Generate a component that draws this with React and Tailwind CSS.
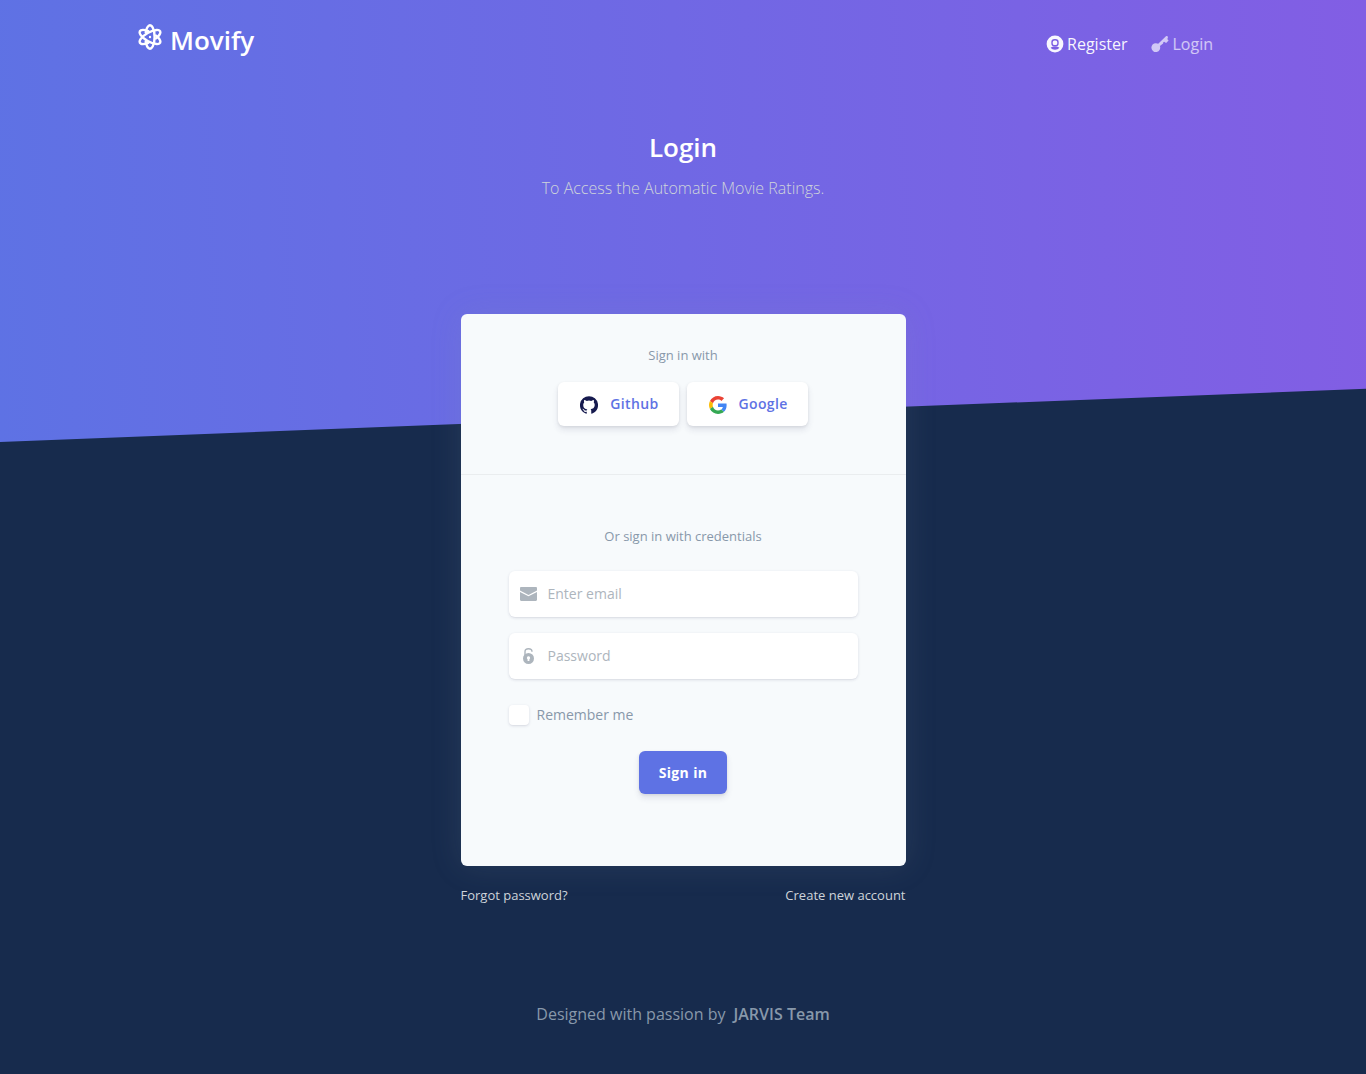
import React from "react";

function LogoIcon() {
  return (
    <svg viewBox="0 0 26 26" className="size-[26px]" fill="none" stroke="currentColor" strokeWidth="2.4" strokeLinecap="round" aria-hidden="true">
      <path d="M8.750 8.500A4.600 11.700 0 1 1 8.750 17.500" />
      <path d="M8.750 8.500A4.600 11.700 0 1 1 8.750 17.500" transform="rotate(120 13 13)" />
      <path d="M8.750 8.500A4.600 11.700 0 1 1 8.750 17.500" transform="rotate(240 13 13)" />
      <circle cx="13" cy="13" r="1.2" fill="currentColor" stroke="none" />
    </svg>
  );
}

function UserIcon() {
  return (
    <svg viewBox="0 0 18 18" className="size-[18px]" aria-hidden="true">
      <circle cx="9" cy="9" r="8.4" fill="currentColor" />
      <rect x="6" y="4.800" width="6" height="6" rx="2.600" fill="none" stroke="#7c60e3" strokeWidth="1.400" />
      <path d="M4.600 12.800c1-.8 2.500-1.300 4.400-1.300s3.400.5 4.400 1.300c-1 1.300-2.600 2-4.400 2s-3.400-.7-4.400-2z" fill="#7c60e3" />
    </svg>
  );
}

function KeyIcon() {
  return (
    <svg viewBox="0 0 18 18" className="size-[18px]" fill="currentColor" aria-hidden="true">
      <path d="M5 8.200c.8 0 1.500.200 2.200.6L15.200 1l1.500.3.2 1.700-.7.900 1.400 1.700-2.500 2.500-2-1.300-.8.400-.2 1.300-3.200 2.500A4.400 4.400 0 1 1 5 8.200z" />
    </svg>
  );
}

function GithubIcon() {
  return (
    <svg viewBox="0 0 24 24" className="mt-0.5 size-[18px]" fill="#161a4e" aria-hidden="true">
      <path d="M12 .3a12 12 0 0 0-3.800 23.400c.6.1.8-.3.8-.6v-2c-3.300.7-4-1.600-4-1.600-.6-1.400-1.400-1.800-1.400-1.800-1-.7.100-.7.100-.7 1.200 0 1.900 1.200 1.900 1.200 1 1.800 2.800 1.300 3.500 1 0-.8.400-1.300.7-1.600-2.700-.3-5.500-1.300-5.500-6 0-1.200.5-2.300 1.300-3.100-.2-.4-.6-1.600 0-3.200 0 0 1-.3 3.400 1.200a11.500 11.500 0 0 1 6 0c2.300-1.500 3.300-1.200 3.300-1.200.6 1.600.2 2.800 0 3.200.9.800 1.300 1.900 1.300 3.200 0 4.600-2.800 5.600-5.500 5.900.5.400.9 1 .9 2.200v3.300c0 .3.100.7.800.6A12 12 0 0 0 12 .3" />
    </svg>
  );
}

function GoogleIcon() {
  return (
    <svg viewBox="0 0 48 48" className="mt-0.5 size-[18px]" aria-hidden="true">
      <path fill="#EA4335" d="M24 9.500c3.540 0 6.710 1.220 9.210 3.600l6.850-6.850C35.900 2.380 30.470 0 24 0 14.620 0 6.510 5.380 2.560 13.220l7.980 6.190C12.430 13.720 17.740 9.500 24 9.500z" />
      <path fill="#4285F4" d="M46.980 24.550c0-1.570-.15-3.090-.38-4.550H24v9.020h12.940c-.58 2.960-2.260 5.480-4.780 7.180l7.730 6c4.510-4.180 7.090-10.360 7.090-17.650z" />
      <path fill="#FBBC05" d="M10.530 28.590A14.500 14.500 0 0 1 9.770 24c0-1.600.27-3.140.76-4.590l-7.980-6.190A23.900 23.900 0 0 0 0 24c0 3.880.92 7.540 2.560 10.780l7.970-6.190z" />
      <path fill="#34A853" d="M24 48c6.480 0 11.930-2.130 15.890-5.810l-7.730-6c-2.150 1.450-4.920 2.300-8.160 2.300-6.260 0-11.570-4.220-13.470-9.910l-7.980 6.190C6.510 42.620 14.620 48 24 48z" />
    </svg>
  );
}

function MailIcon() {
  return (
    <svg viewBox="0 0 17 14" className="h-[14px] w-[17px]" fill="currentColor" aria-hidden="true">
      <path d="M0 1.200C0 .5.500 0 1.200 0h14.600c.7 0 1.200.5 1.200 1.200v2.300L8.500 8 0 3.500z" />
      <path d="M0 4.900 8.500 9.300 17 4.900v7.900c0 .7-.5 1.200-1.200 1.200H1.200C.5 14 0 13.500 0 12.800z" />
    </svg>
  );
}

function LockIcon() {
  return (
    <svg viewBox="0 0 17 16" className="h-[16px] w-[17px]" aria-hidden="true">
      <path d="M5 7.500V3.700C5 1.700 6.500.700 8.500.700s3.500 1 3.500 3" fill="none" stroke="currentColor" strokeWidth="1.400" />
      <path fill="currentColor" fillRule="evenodd" d="M8.500 5a5.500 5.500 0 1 1 0 11 5.500 5.500 0 0 1 0-11zm0 3.200a1.700 1.700 0 0 0-.9 3.100v1.700h1.800v-1.700a1.700 1.700 0 0 0-.9-3.100z" />
    </svg>
  );
}

const raised = "shadow-[0_4px_6px_rgba(50,50,93,0.11),0_1px_3px_rgba(0,0,0,0.08)]";
const field = "flex h-[46px] items-center rounded-md bg-white px-[11px] text-[#adb5bd] shadow-[0_1px_3px_rgba(50,50,93,0.15),0_1px_0_rgba(0,0,0,0.02)]";

function Field({ id, type, label, icon }) {
  return (
    <div className={field}>
      {icon}
      <input
        id={id}
        type={type}
        placeholder={label}
        aria-label={label}
        className="ml-[11px] min-w-0 flex-1 bg-transparent text-sm text-[#8898aa] outline-none placeholder:text-[#adb5bd]"
      />
    </div>
  );
}

function SocialButton({ icon, children }) {
  return (
    <button type="button" className={`flex h-11 items-center gap-3 rounded-md bg-white pr-5 pl-[22px] text-sm font-semibold tracking-[0.025em] text-[#5e72e4] ${raised}`}>
      {icon}
      <span>{children}</span>
    </button>
  );
}

export default function App() {
  return (
    <div className="min-h-screen bg-[#172b4d] font-['Open_Sans',sans-serif] text-base">
      <header className="h-[442px] bg-[linear-gradient(87deg,#5e72e4_0%,#825ee4_100%)] [clip-path:polygon(0_0,100%_0,100%_calc(100%_-_3.9vw),0_100%)]">
        <nav className="mx-auto flex max-w-[1140px] items-start justify-between px-6 pt-6">
          <a href="#" className="flex items-start gap-[7px] text-white">
            <LogoIcon />
            <span className="text-[26px] leading-8 font-semibold">Movify</span>
          </a>
          <div className="mt-2 mr-4 flex gap-6 leading-6">
            <a href="#" className="flex items-center gap-[3px] text-white/95"><UserIcon />Register</a>
            <a href="#" className="flex items-center gap-[3px] text-white/65"><KeyIcon />Login</a>
          </div>
        </nav>
        <div className="mt-[72px] text-center">
          <h1 className="text-[26px] leading-[38px] font-semibold text-white">Login</h1>
          <p className="mt-2 leading-7 font-light text-[#ced4da]">To Access the Automatic Movie Ratings.</p>
        </div>
      </header>

      <main className="relative mx-auto -mt-32 max-w-[445px]">
        <div className="rounded-md bg-[#f7fafc] shadow-[0_0_32px_rgba(136,152,170,0.15)]">
          <section className="border-b border-black/5 px-6 pt-[30px] pb-12">
            <p className="mb-4 text-center text-[13px] leading-[22px] text-[#8898aa]">Sign in with</p>
            <div className="flex justify-center gap-2">
              <SocialButton icon={<GithubIcon />}>Github</SocialButton>
              <SocialButton icon={<GoogleIcon />}>Google</SocialButton>
            </div>
          </section>
          <form className="px-12 pt-[50px] pb-[72px]" onSubmit={(e) => e.preventDefault()}>
            <p className="mb-6 text-center text-[13px] leading-[22px] text-[#8898aa]">Or sign in with credentials</p>
            <div className="flex flex-col gap-4">
              <Field id="email" type="email" label="Enter email" icon={<MailIcon />} />
              <Field id="password" type="password" label="Password" icon={<LockIcon />} />
            </div>
            <div className="mt-6 flex items-center gap-2">
              <input id="remember" type="checkbox" className="size-5 appearance-none rounded bg-white shadow-[0_1px_3px_rgba(50,50,93,0.15),0_1px_0_rgba(0,0,0,0.02)] checked:bg-[#5e72e4]" />
              <label htmlFor="remember" className="text-sm leading-6 text-[#8898aa]">Remember me</label>
            </div>
            <div className="mt-6 flex justify-center">
              <button type="submit" className={`h-[43px] rounded-md bg-[#5e72e4] px-5 text-sm font-bold tracking-[0.025em] text-white ${raised}`}>Sign in</button>
            </div>
          </form>
        </div>
        <div className="mt-[17px] flex justify-between text-[13px] leading-6 text-[#ced4da]">
          <a href="#">Forgot password?</a>
          <a href="#">Create new account</a>
        </div>
      </main>

      <footer className="mt-[95px] flex justify-center gap-2 pb-12 leading-6 text-[#8898aa]">
        <span>Designed with passion by</span>
        <a href="#" className="font-semibold">JARVIS Team</a>
      </footer>
    </div>
  );
}
